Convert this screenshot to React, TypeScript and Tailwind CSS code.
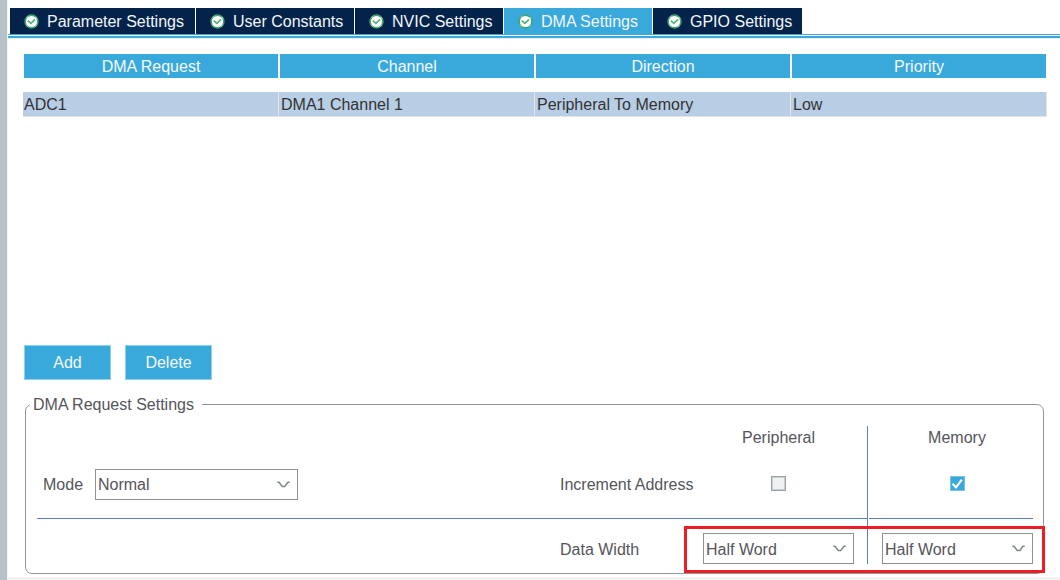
import { useState } from "react";

const tabs = [
  { name: "Parameter Settings", width: "w-[185px]" },
  { name: "User Constants", width: "w-[158px]" },
  { name: "NVIC Settings", width: "w-[148px]" },
  { name: "DMA Settings", width: "w-[148px]" },
  { name: "GPIO Settings", width: "w-[149px]" },
];
const columns = ["DMA Request", "Channel", "Direction", "Priority"];
const rows = [["ADC1", "DMA1 Channel 1", "Peripheral To Memory", "Low"]];
const widths = ["Byte", "Half Word", "Word"];

function StatusIcon() {
  return (
    <svg width="15" height="15" viewBox="0 0 15 15" aria-hidden="true" className="shrink-0">
      <circle cx="7.5" cy="7.5" r="6.4" fill="#fff" stroke="#3fa56c" strokeWidth="1.6" />
      <circle cx="7.5" cy="7.5" r="6.2" fill="none" stroke="#b9e3c6" strokeWidth="1" strokeDasharray="2.4 7.34" strokeDashoffset="-3.6" />
      <path d="M3.8 6.6 6.9 9.4 11 5.4" fill="none" stroke="#55b27a" strokeWidth="1.7" />
    </svg>
  );
}

function Dropdown({
  id,
  label,
  options,
  initial,
  className,
}: {
  id: string;
  label?: string;
  options: string[];
  initial: string;
  className: string;
}) {
  const [value, setValue] = useState(initial);
  return (
    <div className={"relative " + className}>
      <select
        id={id}
        aria-label={label}
        value={value}
        onChange={(e) => setValue(e.target.value)}
        className="block h-[31px] w-full appearance-none border border-[#8b9299] bg-white pb-0 pl-[2px] pr-8 pt-[2px] text-[16px] leading-5 text-[#55555a]"
      >
        {options.map((o) => (
          <option key={o}>{o}</option>
        ))}
      </select>
      <svg
        width="13"
        height="8"
        viewBox="0 0 13 8"
        aria-hidden="true"
        className="pointer-events-none absolute right-2 top-3"
      >
        <path d="M0.3 1.2H2L5.2 5.4H7.8L11 1.2H12.7" fill="none" stroke="#7f8589" strokeWidth="1.5" />
      </svg>
    </div>
  );
}

function CheckBox({ label, initial }: { label: string; initial: boolean }) {
  const [on, setOn] = useState(initial);
  return (
    <label className="relative block size-[15px]">
      <input
        type="checkbox"
        aria-label={label}
        checked={on}
        onChange={() => setOn(!on)}
        className="block size-[15px] appearance-none border border-[#9aa2a8] bg-[#f0f1f3] outline-1 -outline-offset-2 outline-[#c9ced1] checked:border-[#7cc4e6] checked:bg-[#39a9dc] checked:outline-none"
      />
      {on && (
        <svg
          width="15"
          height="15"
          viewBox="0 0 15 15"
          aria-hidden="true"
          className="pointer-events-none absolute left-0 top-0"
        >
          <path d="M2.5 7.8 6 11.3 11.8 3.6" fill="none" stroke="#fff" strokeWidth="2.1" />
        </svg>
      )}
    </label>
  );
}

export default function App() {
  const [active, setActive] = useState("DMA Settings");
  return (
    <div className="flex min-h-screen bg-white font-['Liberation_Sans',Arial,sans-serif] text-[16px] leading-5 text-[#55555a]">
      <div className="w-2 shrink-0 border-r border-[#f0f1f4] bg-[#b6c1c8]" />
      <div className="flex min-w-0 flex-1 flex-col pt-2">
        <div role="tablist" className="flex gap-px pl-[2px]">
          {tabs.map((t) => (
            <button
              key={t.name}
              role="tab"
              aria-selected={t.name === active}
              onClick={() => setActive(t.name)}
              className={
                "flex h-[26px] items-center gap-2 whitespace-nowrap pl-[14px] text-[#f4f7fa] " +
                t.width +
                (t.name === active ? " bg-[#39a9dc]" : " bg-[#03234b]")
              }
            >
              <StatusIcon />
              <span className="pt-[2px]">{t.name}</span>
            </button>
          ))}
        </div>
        <div className="h-px bg-[#39a9dc]" />
        <div className="mt-px h-[3px] border-b border-[#ededf0] bg-[#39a9dc]" />

        <main className="pl-[15px] pr-[13px] pt-[15px]">
          <div className="min-h-[291px]">
            <table className="w-full table-fixed border-separate border-spacing-0">
              <thead>
                <tr>
                  {columns.map((c) => (
                    <th
                      key={c}
                      scope="col"
                      className="h-6 border-x border-white bg-[#39a9dc] p-0 pt-[2px] text-center font-normal text-[#f4f9fc]"
                    >
                      {c}
                    </th>
                  ))}
                </tr>
              </thead>
              <tbody className="before:block before:h-[14px] before:content-['']">
                {rows.map((r) => (
                  <tr key={r[0]}>
                    {r.map((cell) => (
                      <td
                        key={cell}
                        className="h-[25px] border-b border-r border-[#e2e3e5] bg-[#b8cee5] p-0 pl-[2px] pt-[2px] text-[#333333] first:pl-px"
                      >
                        {cell}
                      </td>
                    ))}
                  </tr>
                ))}
              </tbody>
            </table>
          </div>

          <div className="flex gap-[14px] pl-px">
            <button className="h-[35px] w-[87px] border border-[#8fd0ec] bg-[#39a9dc] text-[#f4f9fc]">Add</button>
            <button className="h-[35px] w-[87px] border border-[#8fd0ec] bg-[#39a9dc] text-[#f4f9fc]">Delete</button>
          </div>

          <div className="relative ml-[2px] mr-[3px] mt-4">
            <fieldset className="rounded-[7px] border border-[#8f979c] pb-[9px] pl-[11px] pr-[10px] pt-[13px]">
              <legend className="-ml-[7px] pl-[3px] pr-2 pt-px leading-4">DMA Request Settings</legend>
              <div className="grid grid-cols-[1fr_130px_177px_1px_165px] grid-rows-[24px_68px_1px_45px]">
                <div className="col-start-3 row-start-1 flex items-center justify-center">Peripheral</div>
                <div className="col-start-5 row-start-1 flex items-center justify-center pl-[13px]">Memory</div>

                <div className="col-start-1 row-start-2 flex items-center pl-[6px]">
                  <label htmlFor="mode" className="w-[52px] pt-[2px]">Mode</label>
                  <Dropdown id="mode" options={["Normal", "Circular"]} initial="Normal" className="w-[203px]" />
                </div>
                <div className="col-start-2 row-start-2 flex items-center whitespace-nowrap pt-[2px]">
                  Increment Address
                </div>
                <div className="col-start-3 row-start-2 flex items-center justify-center pb-[2px]">
                  <CheckBox label="Increment Address Peripheral" initial={false} />
                </div>
                <div className="col-start-5 row-start-2 flex items-center justify-center pb-[2px] pl-[13px]">
                  <CheckBox label="Increment Address Memory" initial={true} />
                </div>

                <div className="col-span-3 col-start-1 row-start-3 bg-[#5b7fc0]" />
                <div className="col-start-5 row-start-3 ml-px bg-[#5b7fc0]" />
                <div className="col-start-4 row-span-4 row-start-1 bg-[#5b7fc0]" />

                <div className="col-start-2 row-start-4 flex items-center pt-4">Data Width</div>
                <div className="col-start-3 row-start-4 flex items-end justify-center">
                  <Dropdown id="pw" label="Peripheral Data Width" options={widths} initial="Half Word" className="w-[151px]" />
                </div>
                <div className="col-start-5 row-start-4 flex items-end justify-end">
                  <Dropdown id="mw" label="Memory Data Width" options={widths} initial="Half Word" className="w-[151px]" />
                </div>
              </div>
            </fieldset>
            <div className="pointer-events-none absolute -right-px bottom-px h-[47px] w-[361px] border-[3px] border-[#ee1c25]" />
          </div>
        </main>
        <div className="mt-[3px] min-h-[3px] flex-1 bg-[#f2f2f2]" />
      </div>
    </div>
  );
}
